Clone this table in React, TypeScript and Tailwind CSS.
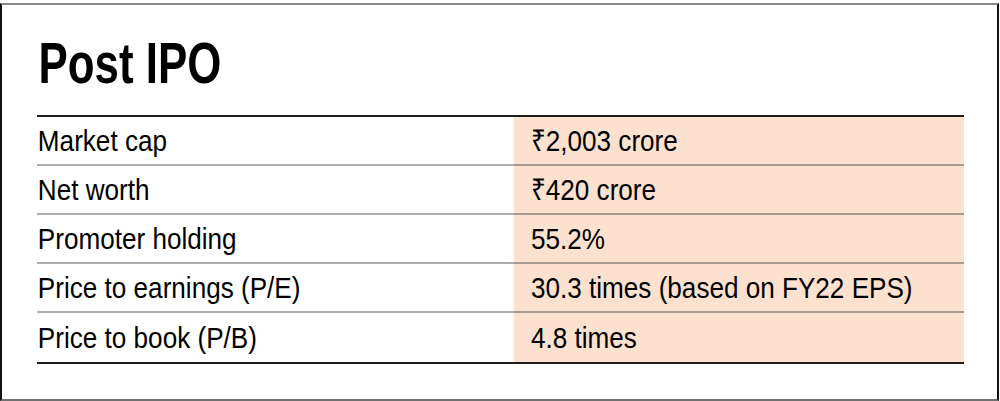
const rows = [
  { label: 'Market cap', value: '₹2,003 crore' },
  { label: 'Net worth', value: '₹420 crore' },
  { label: 'Promoter holding', value: '55.2%' },
  { label: 'Price to earnings (P/E)', value: '30.3 times (based on FY22 EPS)' },
  { label: 'Price to book (P/B)', value: '4.8 times' },
]

// condensed Helvetica look: Liberation Sans squeezed horizontally
const narrow = 'inline-block origin-left whitespace-nowrap'

export default function App() {
  return (
    <div className="h-[401px] w-[1000px] bg-white pt-[3px]">
      <div
        className="h-[398px] w-[999px] border-t-2 border-r-2 border-b-2 border-l-2 border-t-[#8a8a8a] border-r-[#111] border-b-[#6f6f6f] border-l-[#111] pl-[35px] pt-[30px] text-black"
        style={{ fontFamily: '"Liberation Sans", Arial, sans-serif' }}
      >
        <h1 className="text-[57px] font-bold leading-none">
          <span className={narrow + ' scale-x-[0.77] pl-[2px]'}>Post IPO</span>
        </h1>

        <div className="mt-[23px] w-[927px] border-t-2 border-b-2 border-[#1c1c1c]">
          {rows.map((row, i) => (
            <div key={row.label} className="grid grid-cols-[477px_450px]">
              <div
                className={
                  'flex h-[49px] items-center text-[30px] ' +
                  (i < rows.length - 1 ? 'border-b-2 border-[#adadad]' : '')
                }
              >
                <span className={narrow + ' scale-x-[0.87] pl-[1px]'}>{row.label}</span>
              </div>
              <div
                className={
                  'flex h-[49px] items-center bg-[#fde1cf] pl-[17px] text-[30px] ' +
                  (i < rows.length - 1 ? 'border-b-2 border-[#a99a8f]' : '')
                }
              >
                <span className={narrow + ' scale-x-[0.87]'}>{row.value}</span>
              </div>
            </div>
          ))}
        </div>
      </div>
    </div>
  )
}
